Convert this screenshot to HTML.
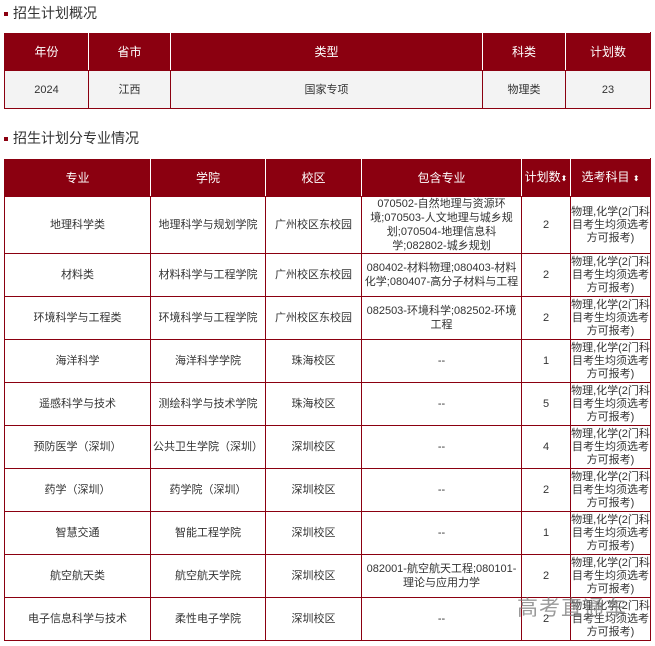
<!DOCTYPE html>
<html><head><meta charset="utf-8"><style>
body{margin:0;width:655px;height:646px;background:#fff;font-family:"Liberation Sans","Noto Sans CJK SC",sans-serif;position:relative;overflow:hidden}
.t{position:absolute;left:4px;font-size:14px;color:#333}
.t:before{content:"";display:inline-block;width:4px;height:4px;background:#8b0010;margin-right:5px;vertical-align:middle}
table{position:absolute;left:4px;border-collapse:collapse;table-layout:fixed;font-size:11px;color:#333}
td,th{border:1px solid #8b0010;text-align:center;padding:0 2px;line-height:14px;overflow:hidden}
th{background:#8b0010;color:#fff;font-weight:normal;font-size:12px;border-color:#fff #fff #8b0010 #fff;border-left:1px solid #fff}
th:first-child{border-left-color:#8b0010}
th:last-child{border-right-color:#8b0010}
#a td{background:#f3f3f3}
td.s{padding:0;white-space:nowrap;line-height:13px}
.wm{position:absolute;left:517px;top:592px;font-size:21px;color:rgba(120,120,120,.75);letter-spacing:1px}
</style></head><body>
<div class="t" style="top:3px">招生计划概况</div>
<table id="a" style="top:32px;width:646px">
<colgroup><col style="width:84px"><col style="width:82px"><col style="width:312px"><col style="width:83px"><col style="width:85px"></colgroup>
<tr style="height:38px"><th>年份</th><th>省市</th><th>类型</th><th>科类</th><th>计划数</th></tr>
<tr style="height:38px"><td>2024</td><td>江西</td><td>国家专项</td><td>物理类</td><td>23</td></tr>
</table>
<div class="t" style="top:128px">招生计划分专业情况</div>
<table style="top:158px;width:646px">
<colgroup><col style="width:146px"><col style="width:115px"><col style="width:96px"><col style="width:160px"><col style="width:49px"><col style="width:80px"></colgroup>
<tr style="height:38px"><th>专业</th><th>学院</th><th>校区</th><th>包含专业</th><th style="padding:0">计划数<span style="font-size:8px">⬍</span></th><th>选考科目 <span style="font-size:8px">⬍</span></th></tr>
<tr style="height:57px"><td>地理科学类</td><td>地理科学与规划学院</td><td>广州校区东校园</td><td>070502-自然地理与资源环境;070503-人文地理与城乡规划;070504-地理信息科学;082802-城乡规划</td><td>2</td><td class="s">物理,化学(2门科<br>目考生均须选考<br>方可报考)</td></tr>
<tr style="height:43px"><td>材料类</td><td>材料科学与工程学院</td><td>广州校区东校园</td><td>080402-材料物理;080403-材料化学;080407-高分子材料与工程</td><td>2</td><td class="s">物理,化学(2门科<br>目考生均须选考<br>方可报考)</td></tr>
<tr style="height:43px"><td>环境科学与工程类</td><td>环境科学与工程学院</td><td>广州校区东校园</td><td>082503-环境科学;082502-环境工程</td><td>2</td><td class="s">物理,化学(2门科<br>目考生均须选考<br>方可报考)</td></tr>
<tr style="height:43px"><td>海洋科学</td><td>海洋科学学院</td><td>珠海校区</td><td>--</td><td>1</td><td class="s">物理,化学(2门科<br>目考生均须选考<br>方可报考)</td></tr>
<tr style="height:43px"><td>遥感科学与技术</td><td>测绘科学与技术学院</td><td>珠海校区</td><td>--</td><td>5</td><td class="s">物理,化学(2门科<br>目考生均须选考<br>方可报考)</td></tr>
<tr style="height:43px"><td>预防医学（深圳）</td><td>公共卫生学院（深圳）</td><td>深圳校区</td><td>--</td><td>4</td><td class="s">物理,化学(2门科<br>目考生均须选考<br>方可报考)</td></tr>
<tr style="height:43px"><td>药学（深圳）</td><td>药学院（深圳）</td><td>深圳校区</td><td>--</td><td>2</td><td class="s">物理,化学(2门科<br>目考生均须选考<br>方可报考)</td></tr>
<tr style="height:43px"><td>智慧交通</td><td>智能工程学院</td><td>深圳校区</td><td>--</td><td>1</td><td class="s">物理,化学(2门科<br>目考生均须选考<br>方可报考)</td></tr>
<tr style="height:43px"><td>航空航天类</td><td>航空航天学院</td><td>深圳校区</td><td>082001-航空航天工程;080101-理论与应用力学</td><td>2</td><td class="s">物理,化学(2门科<br>目考生均须选考<br>方可报考)</td></tr>
<tr style="height:43px"><td>电子信息科学与技术</td><td>柔性电子学院</td><td>深圳校区</td><td>--</td><td>2</td><td class="s">物理,化学(2门科<br>目考生均须选考<br>方可报考)</td></tr>
</table>
<div class="wm">高考直通车</div>
</body></html>
